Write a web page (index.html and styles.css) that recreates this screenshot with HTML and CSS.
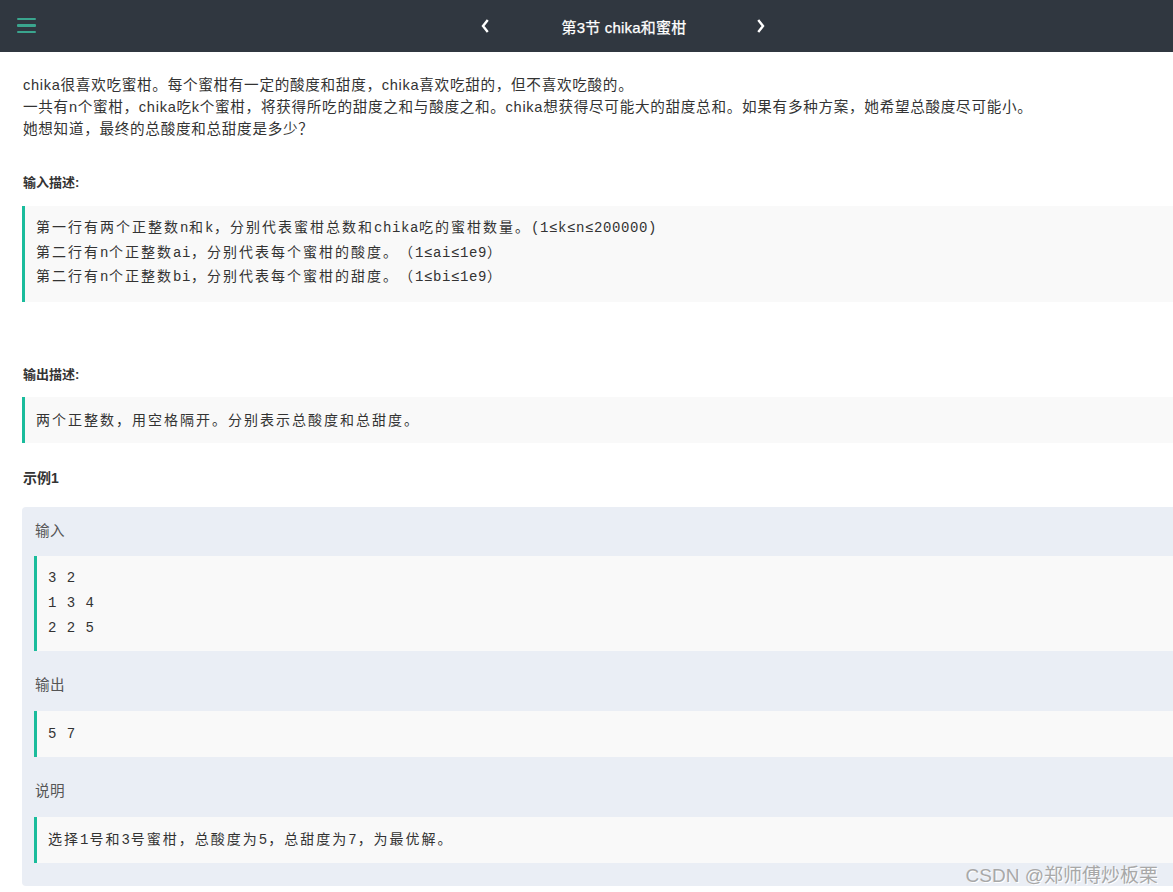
FILE: index.html
```html
<!DOCTYPE html>
<html lang="zh">
<head>
<meta charset="utf-8">
<title>第3节 chika和蜜柑</title>
<link rel="stylesheet" href="styles.css">
</head>
<body>
<header class="topbar">
  <div class="menu">
    <span class="bar"></span><span class="bar"></span><span class="bar"></span>
  </div>
  <nav class="pager">
    <svg class="chev" width="10" height="14" viewBox="0 0 10 14"><polyline points="7,2 3,7 7,12" fill="none" stroke="#fff" stroke-width="2.4" stroke-linecap="square"/></svg>
    <span class="title">第3节 chika和蜜柑</span>
    <svg class="chev" width="10" height="14" viewBox="0 0 10 14"><polyline points="3,2 7,7 3,12" fill="none" stroke="#fff" stroke-width="2.4" stroke-linecap="square"/></svg>
  </nav>
</header>

<main class="content">
  <div class="intro">
    <p>chika很喜欢吃蜜柑。每个蜜柑有一定的酸度和甜度，chika喜欢吃甜的，但不喜欢吃酸的。</p>
    <p>一共有n个蜜柑，chika吃k个蜜柑，将获得所吃的甜度之和与酸度之和。chika想获得尽可能大的甜度总和。如果有多种方案，她希望总酸度尽可能小。</p>
    <p>她想知道，最终的总酸度和总甜度是多少？</p>
  </div>

  <h3 class="sub first">输入描述:</h3>
  <div class="quote tall">
    <span class="line">第一行有两个正整数<span class="en">n</span>和<span class="en">k</span>，分别代表蜜柑总数和<span class="en">chika</span>吃的蜜柑数量。<span class="en">(1≤k≤n≤200000)</span></span>
    <span class="line">第二行有<span class="en">n</span>个正整数<span class="en">ai</span>，分别代表每个蜜柑的酸度。（<span class="en">1≤ai≤1e9</span>）</span>
    <span class="line">第二行有<span class="en">n</span>个正整数<span class="en">bi</span>，分别代表每个蜜柑的甜度。（<span class="en">1≤bi≤1e9</span>）</span>
  </div>

  <h3 class="sub second">输出描述:</h3>
  <div class="quote single">
    <span class="line">两个正整数，用空格隔开。分别表示总酸度和总甜度。</span>
  </div>

  <h3 class="example-title">示例1</h3>
  <section class="example">
    <div class="label first">输入</div>
    <div class="quote inner">
      <span class="line en">3 2</span>
      <span class="line en">1 3 4</span>
      <span class="line en">2 2 5</span>
    </div>
    <div class="label">输出</div>
    <div class="quote inner single">
      <span class="line en">5 7</span>
    </div>
    <div class="label">说明</div>
    <div class="quote inner single">
      <span class="line">选择<span class="en">1</span>号和<span class="en">3</span>号蜜柑，总酸度为<span class="en">5</span>，总甜度为<span class="en">7</span>，为最优解。</span>
    </div>
  </section>
</main>

<div class="watermark">CSDN @郑师傅炒板栗</div>
</body>
</html>
```

FILE: styles.css
```css
* { box-sizing: border-box; }

html, body {
  margin: 0;
  padding: 0;
}

body {
  background: #fff;
  color: #333;
  font-family: "Liberation Sans", "Noto Sans CJK SC", sans-serif;
  overflow: hidden;
  position: relative;
  min-height: 892px;
  text-spacing-trim: space-all;
}

.topbar {
  height: 52px;
  background: #303740;
  display: flex;
  align-items: center;
}

.menu {
  margin-left: 17px;
  width: 19px;
  display: flex;
  flex-direction: column;
  gap: 4px;
  margin-top: -1px;
}

.bar {
  display: block;
  height: 2.5px;
  background: #3aa58e;
  border-radius: 1px;
}

.pager {
  margin-left: 444px;
  width: 286px;
  display: flex;
  align-items: center;
  justify-content: space-between;
}

.chev { display: block; }

.title {
  color: #fff;
  font-size: 15px;
  font-weight: normal;
  letter-spacing: 0.2px;
  margin-left: 2px;
  -webkit-text-stroke: 0.25px #fff;
}

.content {
  padding: 22px 0 0 22px;
}

.intro p {
  margin: 0;
  font-size: 14.6px;
  letter-spacing: 0.7px;
  line-height: 22px;
  padding-left: 1px;
}

.sub, .example-title {
  margin: 0;
  font-weight: bold;
  font-size: 13px;
  line-height: 20px;
  color: #333;
  padding-left: 1px;
}

.sub.first { margin-top: 33px; margin-bottom: 13px; }
.sub.second { margin-top: 63px; margin-bottom: 12px; }

.example-title {
  font-size: 14px;
  margin-top: 25px;
  margin-bottom: 19px;
}

.quote {
  margin: 0;
  background: #f9f9f9;
  border-left: 3px solid #1abc9c;
  padding: 12px 0 10px 11px;
  font-family: "Liberation Mono", "Noto Sans CJK SC", monospace;
  font-size: 14px;
  letter-spacing: 2px;
  line-height: 24px;
  color: #333;
}

.quote .line {
  display: block;
  white-space: pre;
}

.quote .en {
  letter-spacing: 0.6px;
}

.quote.tall { padding: 10px 0 12.5px 11px; line-height: 24.5px; }

.example {
  background: #eaeef5;
  border-radius: 4px 0 0 4px;
  padding: 13px 0 23px 12px;
}

.label {
  font-size: 14.6px;
  letter-spacing: 0.4px;
  line-height: 22px;
  color: #555;
  margin: 23px 0 15px 1px;
}

.label.first { margin: 0 0 14px 1px; }

.quote.inner {
  padding: 10px 0 10px 11px;
  line-height: 25px;
}

.quote.inner .en { letter-spacing: 1px; }

.quote.inner.single { padding: 11px 0 10px 11px; }

.watermark {
  position: absolute;
  right: 15px;
  top: 860px;
  font-size: 19px;
  color: #a8a8a8;
  text-shadow: 1px 1px 0 #fff;
}
```
